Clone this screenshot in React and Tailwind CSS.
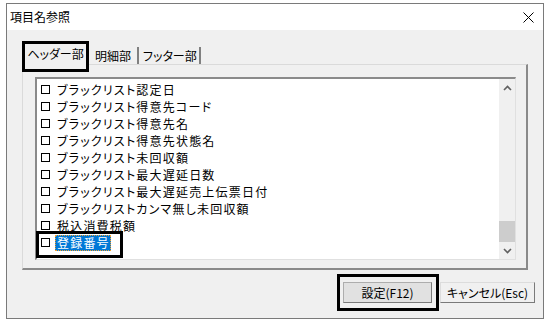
import React from 'react';

const items = [
  'ブラックリスト認定日',
  'ブラックリスト得意先コード',
  'ブラックリスト得意先名',
  'ブラックリスト得意先状態名',
  'ブラックリスト未回収額',
  'ブラックリスト最大遅延日数',
  'ブラックリスト最大遅延売上伝票日付',
  'ブラックリストカンマ無し未回収額',
  '税込消費税額',
];

const font = { fontFamily: '"Noto Sans CJK JP", "Liberation Sans", sans-serif' };

const Chevron = ({ down }) => (
  <svg width="9" height="6" viewBox="0 0 9 6" className="block">
    <path
      d={down ? 'M1 1 L4.5 4.5 L8 1' : 'M1 5 L4.5 1.5 L8 5'}
      fill="none"
      stroke="#606060"
      strokeWidth="1.6"
    />
  </svg>
);

const Row = ({ label, selected }) => (
  <div className="relative flex items-center h-[17px] pl-[4px]">
    <div className="w-[9px] h-[9px] border border-black shrink-0" />
    {selected ? (
      <span className="ml-[5px] h-[16px] pl-[1px] flex items-center bg-[#0078d7] text-white border border-dotted border-[#f0a030] leading-none">
        {label}
      </span>
    ) : (
      <span className="ml-[7px] leading-none whitespace-nowrap">{label}</span>
    )}
    {selected && (
      <div className="absolute left-[-1px] top-[-3px] w-[87px] h-[27px] border-[3px] border-black" />
    )}
  </div>
);

const App = () => {
  return (
    <div
      className="w-[547px] h-[330px] bg-white pt-[3px] pl-[6px] [font-feature-settings:'palt'] text-black"
      style={font}
    >
      <div className="w-[538px] h-[316px] border border-[#7a7a7a] flex flex-col">
        <div className="h-[26px] bg-white flex items-center justify-between pl-[3px] pr-[9px]">
          <span className="text-[12px] leading-none">項目名参照</span>
          <svg width="11" height="11" viewBox="0 0 11 11">
            <path d="M0.5 0.5 L10.5 10.5 M10.5 0.5 L0.5 10.5" stroke="#000" strokeWidth="1" />
          </svg>
        </div>
        <div className="flex-1 bg-[#f0f0f0] flex flex-col">
          <div className="flex items-end h-[34px] pl-[15px] pt-[11px] text-[12px]">
            <div className="relative z-10 w-[67px] h-[31px] mb-[-8px] border-[3px] border-black bg-[#f0f0f0] flex items-start justify-center pt-[4px] leading-none">
              ヘッダー部
            </div>
            <div className="w-[50px] h-[17px] pl-[6px] border-r-2 border-[#808080] flex items-center leading-none">
              明細部
            </div>
            <div className="w-[62px] h-[17px] pl-[4px] border-r-2 border-[#808080] flex items-center leading-none">
              フッター部
            </div>
          </div>
          <div className="ml-[15px] w-[506px] h-[206px] border-t border-l border-[#dadada] border-r-2 border-b-2 border-r-[#8a8a8a] border-b-[#8a8a8a] pt-[12px] pl-[12px]">
            <div className="w-[481px] h-[183px] bg-white border-t-2 border-l-2 border-[#8a8a8a] border-r border-b border-r-[#e0e0e0] border-b-[#e0e0e0] flex">
              <div className="flex-1 pt-[2px] text-[12px] tracking-[1.2px]">
                {items.map((it) => (
                  <Row key={it} label={it} />
                ))}
                <Row label="登録番号" selected />
              </div>
              <div className="w-[16px] bg-[#f0f0f0] flex flex-col">
                <div className="h-[17px] flex items-center justify-center">
                  <Chevron />
                </div>
                <div className="flex-1" />
                <div className="h-[21px] bg-[#cdcdcd]" />
                <div className="h-[17px] flex items-center justify-center">
                  <Chevron down />
                </div>
              </div>
            </div>
          </div>
          <div className="flex justify-end items-center mt-[4px] pr-[8px] text-[12px]">
            <div className="w-[102px] h-[37px] border-[3px] border-black flex items-center pl-[3px]">
              <div className="w-[89px] h-[21px] bg-[#e1e1e1] border border-[#adadad] border-r-[#7a7a7a] border-b-[#7a7a7a] flex items-center justify-center leading-none">
                設定(F12)
              </div>
            </div>
            <div className="ml-[1px] w-[95px] h-[21px] bg-[#f0f0f0] border border-[#dcdcdc] border-r-[#7a7a7a] border-b-[#7a7a7a] flex items-center justify-center leading-none">
              キャンセル(Esc)
            </div>
          </div>
        </div>
      </div>
    </div>
  );
};

export default App;
